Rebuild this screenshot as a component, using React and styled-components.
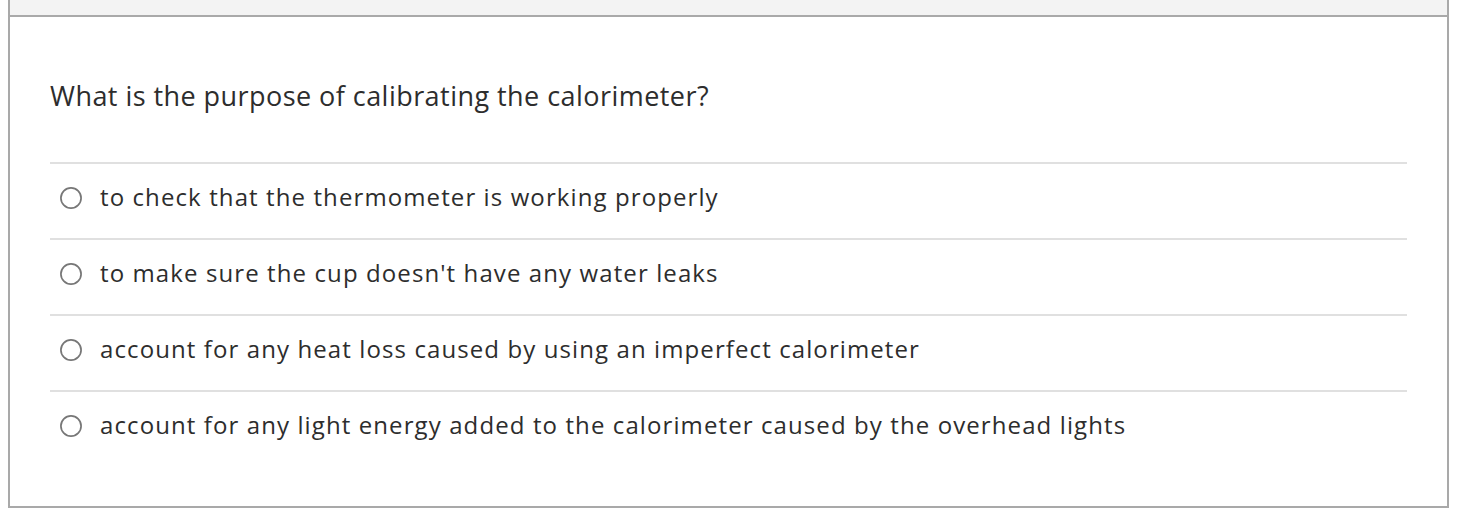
import React from 'react';
import styled, { createGlobalStyle } from 'styled-components';

const GlobalStyle = createGlobalStyle`
  html, body {
    margin: 0;
    padding: 0;
    background: #ffffff;
  }
  body {
    font-family: 'Open Sans', 'Liberation Sans', sans-serif;
    color: #2d2d2d;
  }
`;

const Panel = styled.div`
  margin: 0 11px 0 8px;
  border: 2px solid #a9a9a9;
  border-top: none;
  background: #ffffff;
`;

// bottom of the previous question, cut off by the viewport
const PrevStrip = styled.div`
  height: 15px;
  background: #f3f3f3;
  border-bottom: 2px solid #a9a9a9;
`;

const Body = styled.div`
  padding: 63px 40px 40px;
`;

const Question = styled.p`
  margin: 0 0 50px;
  font-size: 27px;
  line-height: 32px;
  letter-spacing: 0.45px;
  color: #2d2d2d;
`;

const Choices = styled.ul`
  list-style: none;
  margin: 0;
  padding: 0;
`;

const Choice = styled.li`
  box-sizing: border-box;
  display: flex;
  align-items: flex-start;
  gap: 18px;
  height: 76px;
  padding: 19px 0 0 10px;
  border-top: 2px solid #e0e0e0;
  cursor: pointer;
`;

const Radio = styled.svg`
  flex: none;
  width: 22px;
  height: 22px;
  margin-top: 4px;
`;

const Label = styled.span`
  font-size: 24px;
  line-height: 28px;
  letter-spacing: 1.1px;
  color: #2d2d2d;
`;

const choices = [
  'to check that the thermometer is working properly',
  "to make sure the cup doesn't have any water leaks",
  'account for any heat loss caused by using an imperfect calorimeter',
  'account for any light energy added to the calorimeter caused by the overhead lights',
];

function RadioIcon() {
  return (
    <Radio viewBox="0 0 22 22">
      <circle cx="11" cy="11" r="10.1" fill="#ffffff" stroke="#777777" strokeWidth="1.7" />
    </Radio>
  );
}

export default function App() {
  return (
    <>
      <GlobalStyle />
      <Panel>
        <PrevStrip />
        <Body>
          <Question>What is the purpose of calibrating the calorimeter?</Question>
          <Choices>
            {choices.map((text) => (
              <Choice key={text}>
                <RadioIcon />
                <Label>{text}</Label>
              </Choice>
            ))}
          </Choices>
        </Body>
      </Panel>
    </>
  );
}
